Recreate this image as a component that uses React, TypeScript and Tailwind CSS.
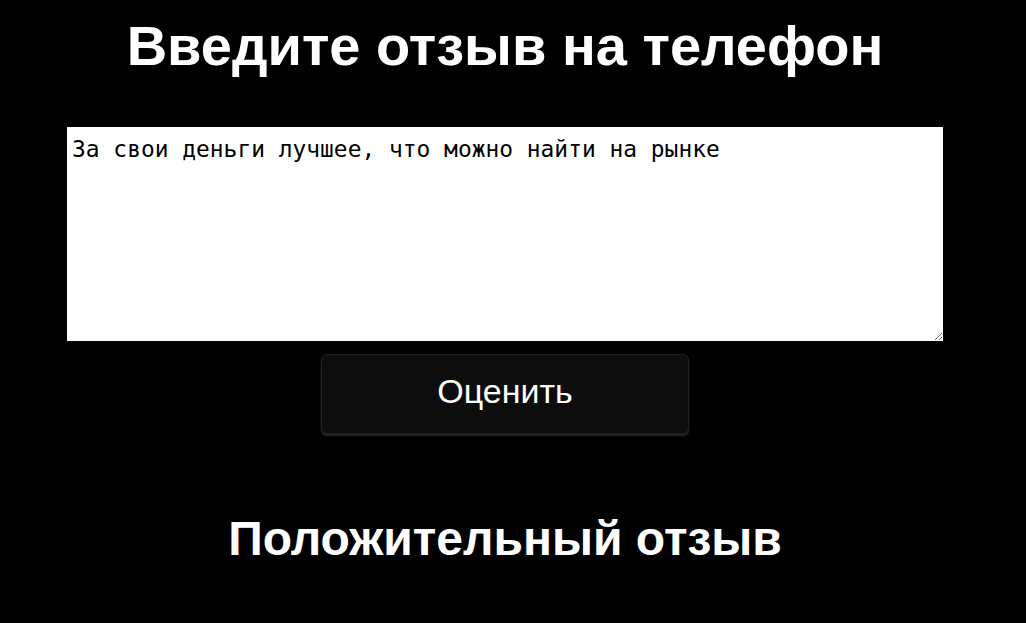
import {useState} from "react";

export default function App() {
  const [review, setReview] = useState("За свои деньги лучшее, что можно найти на рынке");

  return (
    <div className="min-h-[623px] w-full bg-black font-['Liberation_Sans',Arial,sans-serif] text-white">
      <div className="w-[1010px] flex flex-col items-center">
        <h1 className="mt-[14px] text-[56px] leading-[64px] font-bold">
          Введите отзыв на телефон
        </h1>
        <textarea
          className="mt-[49px] w-[876px] h-[214px] bg-white text-black px-[5px] pt-[8px] pb-[6px] font-['DejaVu_Sans_Mono',monospace] text-[22.9px] leading-[28px] outline-none"
          value={review}
          onChange={e => setReview(e.target.value)}
        />
        <button
          type="button"
          className="mt-[13px] w-[368px] h-[80px] pb-[5px] rounded-[6px] bg-[#0d0d0d] border border-[#1f1f1f] shadow-[0_2px_2px_#2a2a2a] text-[34px] text-white"
        >
          Оценить
        </button>
        <h2 className="mt-[77px] text-[48px] leading-[55px] font-bold">
          Положительный отзыв
        </h2>
      </div>
    </div>
  );
}
